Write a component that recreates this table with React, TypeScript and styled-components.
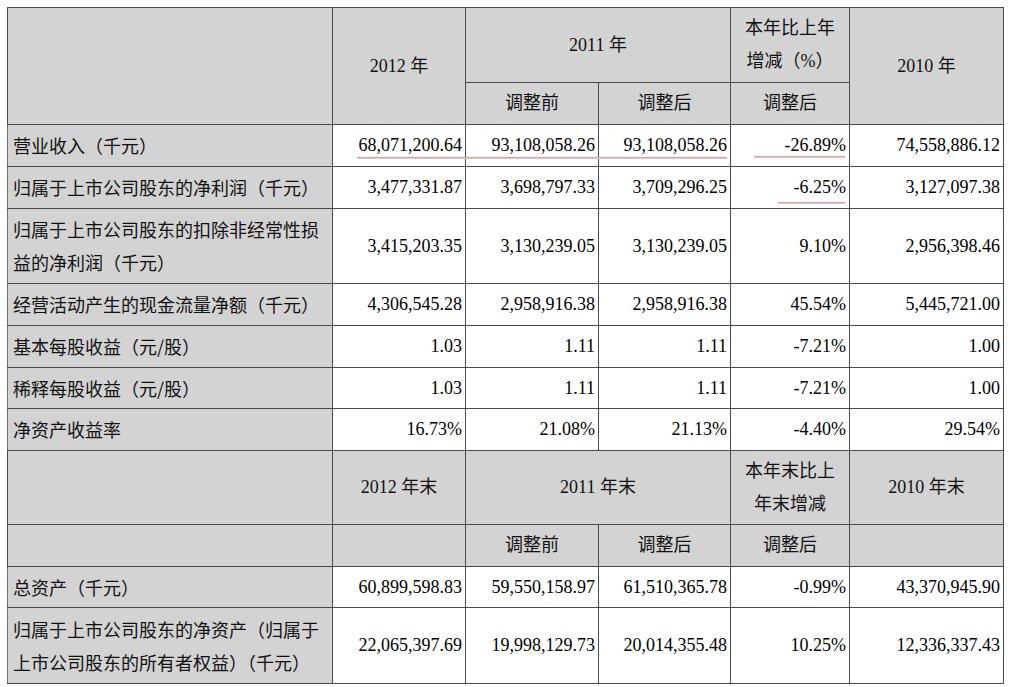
import React from "react";
import styled, { createGlobalStyle, css } from "styled-components";

const GlobalStyle = createGlobalStyle`
  html, body { margin: 0; padding: 0; background: #ffffff; }
  body { color: #000; }
`;

const Page = styled.div`
  padding: 7px 0 0 7px;
`;

const Table = styled.table`
  border-collapse: collapse;
  table-layout: fixed;
  width: 996px;
  border: 1px solid #6e6e6e;
  font-family: "Liberation Serif", "Noto Sans CJK SC", serif;
  font-size: 18px;
  line-height: 33px;
`;

const Row = styled.tr<{ $h: number }>`
  height: ${(p) => p.$h}px;
`;

const cellBase = css`
  padding: 0;
  vertical-align: middle;
  white-space: nowrap;
  border: 1px solid #4a4a4a;
`;

const HeadCell = styled.td`
  ${cellBase};
  background: #d3d3d3;
  text-align: center;
  font-weight: normal;
  color: #111;
`;

const LabelCell = styled.td`
  ${cellBase};
  background: #d3d3d3;
  text-align: left;
  padding-left: 5px;
  font-family: "Noto Sans CJK SC", "Liberation Sans", sans-serif;
  color: #111;
  border-left-color: #6e6e6e;
`;

type Mark = { from: number; to: number; top: number };

const NumCell = styled.td<{ $mark?: Mark }>`
  ${cellBase};
  background: #ffffff;
  text-align: right;
  padding-right: 3px;
  position: relative;
  ${(p) =>
    p.$mark &&
    css`
      &::after {
        content: "";
        position: absolute;
        left: ${p.$mark.from}px;
        right: ${p.$mark.to}px;
        top: ${p.$mark.top}px;
        height: 1px;
        background: #f59797;
        box-shadow: 0 1px 0 #cfcfcf;
      }
    `}
`;

type DataRow = {
  label: React.ReactNode;
  h: number;
  values: string[];
  marks?: (Mark | undefined)[];
};

const topRows: DataRow[] = [
  {
    label: "营业收入（千元）",
    h: 42,
    values: ["68,071,200.64", "93,108,058.26", "93,108,058.26", "-26.89%", "74,558,886.12"],
    marks: [
      { from: 24, to: -1, top: 32 },
      { from: 0, to: -1, top: 32 },
      { from: 0, to: 3, top: 32 },
      { from: 23, to: 4, top: 31 },
    ],
  },
  {
    label: "归属于上市公司股东的净利润（千元）",
    h: 42,
    values: ["3,477,331.87", "3,698,797.33", "3,709,296.25", "-6.25%", "3,127,097.38"],
    marks: [undefined, undefined, undefined, { from: 47, to: 4, top: 35 }],
  },
  {
    label: (
      <>
        归属于上市公司股东的扣除非经常性损
        <br />
        益的净利润（千元）
      </>
    ),
    h: 75,
    values: ["3,415,203.35", "3,130,239.05", "3,130,239.05", "9.10%", "2,956,398.46"],
  },
  {
    label: "经营活动产生的现金流量净额（千元）",
    h: 42,
    values: ["4,306,545.28", "2,958,916.38", "2,958,916.38", "45.54%", "5,445,721.00"],
  },
  {
    label: "基本每股收益（元/股）",
    h: 42,
    values: ["1.03", "1.11", "1.11", "-7.21%", "1.00"],
  },
  {
    label: "稀释每股收益（元/股）",
    h: 41,
    values: ["1.03", "1.11", "1.11", "-7.21%", "1.00"],
  },
  {
    label: "净资产收益率",
    h: 42,
    values: ["16.73%", "21.08%", "21.13%", "-4.40%", "29.54%"],
  },
];

const bottomRows: DataRow[] = [
  {
    label: "总资产（千元）",
    h: 41,
    values: ["60,899,598.83", "59,550,158.97", "61,510,365.78", "-0.99%", "43,370,945.90"],
  },
  {
    label: (
      <>
        归属于上市公司股东的净资产（归属于
        <br />
        上市公司股东的所有者权益）（千元）
      </>
    ),
    h: 76,
    values: ["22,065,397.69", "19,998,129.73", "20,014,355.48", "10.25%", "12,336,337.43"],
  },
];

const renderRows = (rows: DataRow[]) =>
  rows.map((r, i) => (
    <Row $h={r.h} key={i}>
      <LabelCell>{r.label}</LabelCell>
      {r.values.map((v, j) => (
        <NumCell key={j} $mark={r.marks?.[j]}>
          {v}
        </NumCell>
      ))}
    </Row>
  ));

export default function App() {
  return (
    <>
      <GlobalStyle />
      <Page>
        <Table>
          <colgroup>
            <col style={{ width: 325 }} />
            <col style={{ width: 133 }} />
            <col style={{ width: 133 }} />
            <col style={{ width: 132 }} />
            <col style={{ width: 119 }} />
            <col style={{ width: 154 }} />
          </colgroup>
          <tbody>
            <Row $h={75}>
              <HeadCell rowSpan={2} />
              <HeadCell rowSpan={2}>2012 年</HeadCell>
              <HeadCell colSpan={2}>2011 年</HeadCell>
              <HeadCell>
                本年比上年
                <br />
                增减（%）
              </HeadCell>
              <HeadCell rowSpan={2}>2010 年</HeadCell>
            </Row>
            <Row $h={42}>
              <HeadCell>调整前</HeadCell>
              <HeadCell>调整后</HeadCell>
              <HeadCell>调整后</HeadCell>
            </Row>
            {renderRows(topRows)}
            <Row $h={74}>
              <HeadCell />
              <HeadCell>2012 年末</HeadCell>
              <HeadCell colSpan={2}>2011 年末</HeadCell>
              <HeadCell>
                本年末比上
                <br />
                年末增减
              </HeadCell>
              <HeadCell>2010 年末</HeadCell>
            </Row>
            <Row $h={42}>
              <HeadCell />
              <HeadCell />
              <HeadCell>调整前</HeadCell>
              <HeadCell>调整后</HeadCell>
              <HeadCell>调整后</HeadCell>
              <HeadCell />
            </Row>
            {renderRows(bottomRows)}
          </tbody>
        </Table>
      </Page>
    </>
  );
}
